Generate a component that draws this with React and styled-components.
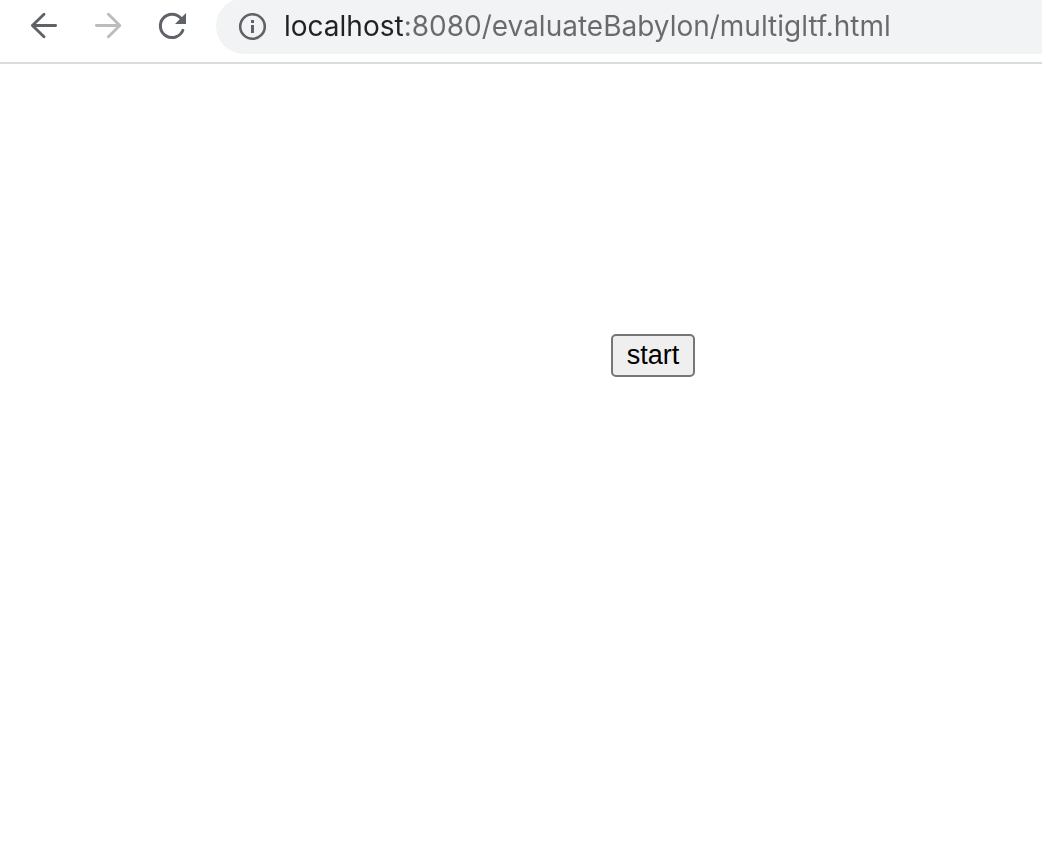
import React from "react";
import styled, { createGlobalStyle } from "styled-components";

const GlobalStyle = createGlobalStyle`
  * { box-sizing: border-box; }
  body { margin: 0; background: #fff; overflow-x: hidden; }
`;

const Toolbar = styled.header`
  display: flex;
  align-items: flex-start;
  height: 64px;
  padding-left: 12px;
  overflow: hidden;
  border-bottom: 2px solid #dadcdb;
`;

const NavButtons = styled.nav`
  display: flex;
  margin-right: 12px;
`;

const IconButton = styled.button`
  width: 64px;
  height: 52px;
  padding: 0;
  border: 0;
  background: none;
  color: #5f6368;

  &:disabled { color: #babcbe; }
  svg { display: block; width: 64px; height: 52px; }
`;

const AddressBar = styled.label`
  display: flex;
  flex: 1;
  align-items: center;
  min-width: 0;
  height: 56px;
  margin-top: -2px;
  padding-left: 20px;
  border-radius: 28px 0 0 28px;
  background: #f1f3f4;
  color: #5f6368;

  svg { flex: none; width: 32px; height: 32px; }
`;

const AddressInput = styled.input`
  flex: 1;
  min-width: 0;
  height: 40px;
  margin-left: 16px;
  padding: 0;
  border: 0;
  outline: 0;
  background: linear-gradient(to right, #202124 120px, #696a6d 120px);
  -webkit-background-clip: text;
  background-clip: text;
  color: transparent;
  caret-color: #202124;
  font: 28px Inter, Roboto, sans-serif;
`;

const Page = styled.main`
  display: flex;
  justify-content: center;
  padding: 270px 0 0 264px;
`;

const StartButton = styled.button`
  width: 84px;
  height: 43px;
  padding: 0;
  border: 2px solid #767676;
  border-radius: 5px;
  background: #efefef;
  color: #000;
  font: 27px "Liberation Sans", Arial, sans-serif;
`;

const NavIcon = ({ children }) => (
  <svg viewBox="0 0 64 52" fill="none" stroke="currentColor" strokeWidth="2.9" strokeLinecap="round" strokeLinejoin="round" aria-hidden="true">
    {children}
  </svg>
);

export default function App() {
  return (
    <>
      <GlobalStyle />
      <Toolbar>
        <NavButtons aria-label="Browser navigation">
          <IconButton aria-label="Back">
            <NavIcon><path d="M43.6 25.5H20.4M32 14.3L20.4 25.5L32 36.7" /></NavIcon>
          </IconButton>
          <IconButton aria-label="Forward" disabled>
            <NavIcon><path d="M20.4 25.5H43.6M32.4 14.3L43.8 25.5L32.4 36.7" /></NavIcon>
          </IconButton>
          <IconButton aria-label="Reload">
            <NavIcon>
              <path d="M42.9 30.3A11.7 11.7 0 1 1 41 18.3" strokeWidth="3" />
              <path d="M46 13V24H35Z" fill="currentColor" stroke="none" />
            </NavIcon>
          </IconButton>
        </NavButtons>
        <AddressBar>
          <svg viewBox="0 0 32 32" fill="none" aria-hidden="true">
            <circle cx="16.5" cy="16.5" r="12.3" stroke="currentColor" strokeWidth="2.6" />
            <path d="M15 10H18V13H15ZM15 15H18V23H15Z" fill="currentColor" />
          </svg>
          <AddressInput aria-label="Address" spellCheck={false} defaultValue="localhost:8080/evaluateBabylon/multigltf.html" />
        </AddressBar>
      </Toolbar>
      <Page>
        <StartButton>start</StartButton>
      </Page>
    </>
  );
}
